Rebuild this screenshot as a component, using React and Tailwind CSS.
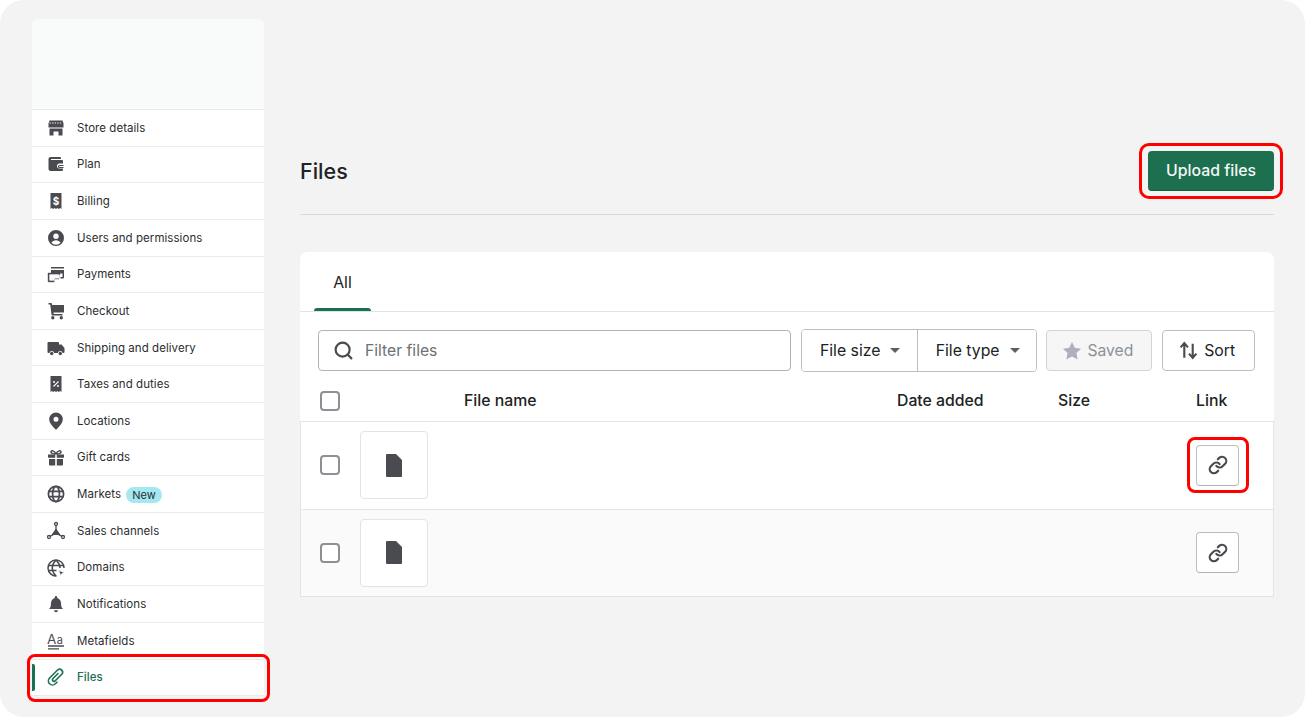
import React from "react";
import { Link as LinkIcon, Search } from "lucide-react";

const ink = "#4a4b50";

// 20x20 glyphs in the Polaris style, drawn by hand
const Glyph = ({ children, className = "" }) => (
  <svg viewBox="0 0 20 20" className={`w-[20px] h-[20px] shrink-0 ${className}`} fill={ink}>
    {children}
  </svg>
);

const icons = {
  store: (
    <Glyph>
      <path d="M3.5 2.5h13l1 3v4h-15v-4z" />
      <path d="M3.5 5h13" stroke="#fff" strokeWidth="0.9" strokeDasharray="1.4 1.2" />
      <path d="M3.5 10.5h13v7h-4v-4h-5v4h-4z" />
    </Glyph>
  ),
  plan: (
    <Glyph>
      <path d="M2.5 5a2 2 0 0 1 2-2h9.5a1 1 0 0 1 1 1v1H5v1h11a1 1 0 0 1 1 1v2.5h-3.5a2.5 2.5 0 0 0 0 5H17V16a1 1 0 0 1-1 1H4.500a2 2 0 0 1-2-2z" />
      <path d="M17.500 11.500h-4a1 1 0 0 0 0 2h4" fill="none" stroke={ink} strokeWidth="1.200" />
    </Glyph>
  ),
  billing: (
    <Glyph>
      <path d="M4.500 2h11v16l-1.400-1-1.400 1-1.300-1-1.400 1-1.400-1-1.300 1-1.400-1-1.400 1z" />
      <text x="10" y="13.500" textAnchor="middle" fontSize="10" fontWeight="700" fontFamily="Inter, sans-serif" fill="#fff">$</text>
    </Glyph>
  ),
  users: (
    <Glyph>
      <path fillRule="evenodd" d="M10 2a8 8 0 1 1 0 16 8 8 0 0 1 0-16zm0 3.500a2.700 2.700 0 1 0 0 5.400 2.700 2.700 0 0 0 0-5.400zm-4.600 9.300a6.200 6.200 0 0 0 9.200 0c-.8-1.700-2.600-2.600-4.600-2.600s-3.800.9-4.600 2.600z" />
    </Glyph>
  ),
  payments: (
    <Glyph>
      <path d="M5 3h13v1.500H5zM5 6h13v7.500a1 1 0 0 1-1 1h-2.500V13h2V9.500H5z" />
      <path d="M2 9h12v1.600H3.500v5.900H8V18H3a1 1 0 0 1-1-1zM8 18v-3.500M13 10.500v4.500H8.500" fill={ink} stroke={ink} strokeWidth="0.4" />
      <path d="M3.500 10.600H13v3.800H8v2.100H3.500z" fill="#fff" />
    </Glyph>
  ),
  checkout: (
    <Glyph>
      <path d="M2.500 2H5a1 1 0 0 1 1 .8L6.200 4H18v7.500H7.500l.2 1.500H16.500v1.500H6.500a1 1 0 0 1-1-.9L4.200 3.500H2.500z" />
      <circle cx="6.800" cy="16.700" r="1.700" />
      <circle cx="15.300" cy="16.700" r="1.700" />
    </Glyph>
  ),
  shipping: (
    <Glyph>
      <path d="M1.500 5a1 1 0 0 1 1-1h9.500a1 1 0 0 1 1 1v1.500h2.500l3 3.500v4a1 1 0 0 1-1 1h-.8a2.500 2.500 0 0 0-4.900 0H8.200a2.500 2.500 0 0 0-4.900 0h-.8a1 1 0 0 1-1-1z" />
      <circle cx="5.700" cy="15.500" r="1.700" />
      <circle cx="14.300" cy="15.500" r="1.700" />
    </Glyph>
  ),
  taxes: (
    <Glyph>
      <path d="M4.500 2h11v16l-1.400-1-1.400 1-1.300-1-1.400 1-1.400-1-1.300 1-1.400-1-1.400 1z" />
      <path d="M7.500 12.500l5-5" stroke="#fff" strokeWidth="1.100" />
      <circle cx="8" cy="8" r="1" fill="#fff" />
      <circle cx="12" cy="12" r="1" fill="#fff" />
    </Glyph>
  ),
  locations: (
    <Glyph>
      <path fillRule="evenodd" d="M10 1.500a6.800 6.800 0 0 1 6.800 6.800c0 3.700-3.800 7.600-6.100 10a1 1 0 0 1-1.400 0c-2.300-2.400-6.100-6.300-6.100-10A6.800 6.800 0 0 1 10 1.500zm0 4.300a2.500 2.500 0 1 0 0 5 2.500 2.500 0 0 0 0-5z" />
    </Glyph>
  ),
  gift: (
    <Glyph>
      <path d="M2 6.500h7.200v3.200H2zM10.800 6.500H18v3.200h-7.200zM3 11h6.200v6.500H4a1 1 0 0 1-1-1zM10.800 11H17v5.500a1 1 0 0 1-1 1h-5.200z" />
      <path d="M10 6C8.500 2.500 5 1.800 5 4c0 1.500 2.500 2 5 2zm0 0c1.500-3.500 5-4.200 5-2 0 1.500-2.500 2-5 2z" fill="none" stroke={ink} strokeWidth="1.500" />
    </Glyph>
  ),
  globe: (
    <Glyph>
      <g fill="none" stroke={ink} strokeWidth="1.700">
        <circle cx="10" cy="10" r="7.600" />
        <path d="M2.500 7.300h15M2.500 12.700h15" />
        <ellipse cx="10" cy="10" rx="3.400" ry="7.600" />
      </g>
    </Glyph>
  ),
  sales: (
    <Glyph>
      <circle cx="10" cy="3" r="1.500" fill="none" stroke={ink} strokeWidth="1.300" />
      <circle cx="3" cy="16" r="1.500" fill="none" stroke={ink} strokeWidth="1.300" />
      <circle cx="17" cy="16" r="1.500" fill="none" stroke={ink} strokeWidth="1.300" />
      <path d="M10 7.500l4 5.500v1H6v-1z" />
      <path d="M10 4.500v5M4.300 15.200l3-1.500M15.700 15.200l-3-1.500" stroke={ink} strokeWidth="1.300" />
    </Glyph>
  ),
  domains: (
    <Glyph>
      <g fill="none" stroke={ink} strokeWidth="1.500">
        <path d="M10.500 17.900A8 8 0 1 1 18 10" />
        <path d="M2.200 7.500h15.500M2.200 12.500h8.300" />
        <path d="M10 2c-5 5-5 11 0 16M10 2c2.800 2.800 4 5.500 4.100 8" />
      </g>
      <path d="M12.500 12.500l6 1.800-2.500 1.100-1.100 2.600z" stroke="#fff" strokeWidth="0.8" />
    </Glyph>
  ),
  bell: (
    <Glyph>
      <path d="M10 2a1.200 1.200 0 0 1 1.200 1.200v.7c2.400.6 3.800 2.700 3.800 5.100 0 3.300.6 4.700 2 6H3c1.400-1.300 2-2.700 2-6 0-2.400 1.400-4.500 3.800-5.100v-.7A1.200 1.200 0 0 1 10 2z" />
      <path d="M8 16.300h4a2 2 0 0 1-4 0z" />
    </Glyph>
  ),
  metafields: (
    <Glyph>
      <text x="1" y="12.500" fontSize="13.500" fontFamily="Inter, sans-serif" fontWeight="400" fill={ink}>A</text>
      <text x="10.800" y="12.500" fontSize="11" fontFamily="Inter, sans-serif" fontWeight="400" fill={ink}>a</text>
      <path d="M2 15h16M2 17.800h11" stroke={ink} strokeWidth="1.300" />
    </Glyph>
  ),
};

const Clip = () => (
  <svg viewBox="0 0 20 20" className="w-[20px] h-[20px] shrink-0" fill="none" stroke="#1c7050" strokeWidth="1.600" strokeLinecap="round">
    <path d="M12 6.500L6.800 11.700a1.600 1.600 0 0 0 2.200 2.300L16 7a3 3 0 0 0-4.200-4.200L3.600 11a4.100 4.100 0 0 0 5.800 5.800L11 15.200" />
  </svg>
);

const navItems = [
  ["Store details", "store"],
  ["Plan", "plan"],
  ["Billing", "billing"],
  ["Users and permissions", "users"],
  ["Payments", "payments"],
  ["Checkout", "checkout"],
  ["Shipping and delivery", "shipping"],
  ["Taxes and duties", "taxes"],
  ["Locations", "locations"],
  ["Gift cards", "gift"],
  ["Markets", "globe"],
  ["Sales channels", "sales"],
  ["Domains", "domains"],
  ["Notifications", "bell"],
  ["Metafields", "metafields"],
];

function NavRow({ label, icon }) {
  return (
    <div className="h-[36.65px] border-t border-[#ebebeb] flex items-center pl-[14px] bg-white">
      {icons[icon]}
      <span className="ml-[11px] pt-[1px] text-[11.5px] tracking-[0.05px] text-[#2c2e30]">{label}</span>
      {label === "Markets" && (
        <span className="ml-[5px] mt-[1px] h-[16px] px-[6px] rounded-full bg-[#a4e8f2] text-[11px] leading-[16px] text-[#2c2e30]">New</span>
      )}
    </div>
  );
}

function Sidebar() {
  return (
    <aside className="w-[232px] shrink-0 flex flex-col">
      <div className="h-[90px] bg-[#f9fafa] rounded-t-[6px]" />
      {navItems.map(([label, icon]) => (
        <NavRow key={label} label={label} icon={icon} />
      ))}
      <div className="relative h-[37px] border-y border-[#ebebeb] bg-white flex items-center pl-[14px]">
        <span className="absolute left-0 top-[4px] bottom-[4px] w-[3px] bg-[#1c7050] rounded-r-[2px]" />
        <Clip />
        <span className="ml-[11px] pt-[2px] text-[11.5px] tracking-[0.05px] font-medium text-[#1c7050]">Files</span>
        <span className="absolute left-[-5px] right-[-6px] top-[-6px] bottom-[-7px] border-[3px] border-[#ff0000] rounded-[8px]" />
      </div>
    </aside>
  );
}

function Checkbox() {
  return <span className="block w-[20px] h-[20px] rounded-[4px] border-2 border-[#8c9196] bg-white shrink-0" />;
}

const Caret = () => <span className="w-0 h-0 border-x-[5px] border-x-transparent border-t-[5px] border-t-[#5c5f62]" />;

function FileRow({ stripe }) {
  return (
    <div className={`h-[87.5px] border-t border-x border-[#e4e5e7] flex items-center pl-[18.5px] pr-[34px] ${stripe ? "bg-[#fafafa]" : "bg-white"}`}>
      <Checkbox />
      <div className="ml-[20px] w-[68px] h-[68px] rounded-[4px] border border-[#e1e3e5] bg-white flex items-center justify-center">
        <svg viewBox="0 0 16 23" className="w-[16px] h-[23px]" fill={ink}>
          <path d="M1 0h9l6 6v16a1 1 0 0 1-1 1H1a1 1 0 0 1-1-1V1a1 1 0 0 1 1-1z" />
        </svg>
      </div>
      <div className="flex-1" />
      <div className="relative">
        <button className="w-[43px] h-[41px] rounded-[4px] border border-[#babfc3] border-b-[#aeb4b9] bg-white flex items-center justify-center">
          <LinkIcon size={20} color={ink} strokeWidth={2.6} />
        </button>
        {!stripe && <span className="absolute left-[-9px] right-[-10px] top-[-8px] bottom-[-7px] border-[3px] border-[#ff0000] rounded-[8px]" />}
      </div>
    </div>
  );
}

function Toolbar() {
  const btn = "h-[41px] bg-white text-[15.8px] text-[#202223] flex items-center";
  return (
    <div className="flex items-center pl-[18px] pr-[19px] mt-[17px]">
      <div className="w-[474px] h-[41px] rounded-[4px] border border-[#aeb4b9] bg-white flex items-center pl-[14px]">
        <Search size={21} color={ink} strokeWidth={2.5} />
        <span className="ml-[11px] text-[15.7px] text-[#6d7175]">Filter files</span>
      </div>
      <div className="ml-[10px] flex rounded-[4px] border border-[#babfc3] overflow-hidden">
        <div className={`${btn} w-[116px] h-[39px] pl-[18px] gap-[10px] border-r border-[#babfc3]`}>File size <Caret /></div>
        <div className={`${btn} w-[119px] h-[39px] pl-[18px] gap-[10px]`}>File type <Caret /></div>
      </div>
      <div className="ml-[9px] w-[106px] h-[41px] rounded-[4px] border border-[#d2d5d8] bg-[#f6f6f7] flex items-center pl-[15px] gap-[5px] text-[15.7px] text-[#8c9196]">
        <svg viewBox="0 0 20 20" className="w-[20px] h-[20px]" fill="#aeb0bb">
          <path d="M10 1l2.800 5.800 6.200.9-4.500 4.400 1.100 6.300L10 15.400l-5.600 3 1.100-6.300L1 7.700l6.200-.9z" />
        </svg>
        Saved
      </div>
      <div className={`${btn} ml-[10px] w-[93px] rounded-[4px] border border-[#babfc3] pl-[15px] gap-[5px]`}>
        <svg viewBox="0 0 20 20" className="w-[21px] h-[21px]" fill="none" stroke={ink} strokeWidth="2">
          <path d="M6 17V3.500M2.500 7L6 3l3.500 4M14 3.500V17M10.500 13l3.500 4 3.500-4" />
        </svg>
        Sort
      </div>
    </div>
  );
}

function TableHead() {
  return (
    <div className="h-[49px] pt-[9px] flex items-center pl-[19.5px] text-[15.8px] font-[450] text-[#202223]">
      <Checkbox />
      <span className="ml-[124.5px] w-[433px]">File name</span>
      <span className="w-[161px]">Date added</span>
      <span className="w-[138px]">Size</span>
      <span>Link</span>
    </div>
  );
}

export default function App() {
  return (
    <div className="w-[1305px] h-[717px] bg-white overflow-hidden" style={{ fontFamily: "Inter, 'Liberation Sans', sans-serif" }}>
      <div className="h-full rounded-[24px] bg-[#f3f3f3] flex pl-[32px] pt-[19px]">
        <Sidebar />
        <main className="ml-[36px] w-[974px] flex flex-col">
          <div className="mt-[132px] h-[64px] pb-[23px] border-b border-[#d9dadb] flex items-center justify-between">
            <h1 className="text-[21.5px] font-[550] text-[#202223]">Files</h1>
            <div className="relative">
              <button className="w-[126px] h-[40px] pt-[1px] rounded-[4px] bg-[#1c7050] border-b border-[#145a3f] text-[15.8px] font-[450] text-[#f4f7f5]">Upload files</button>
              <span className="absolute left-[-9px] right-[-9px] top-[-8px] bottom-[-8px] border-[3px] border-[#ff0000] rounded-[10px]" />
            </div>
          </div>
          <section className="mt-[37px] rounded-t-[8px] bg-white border-b border-[#e1e3e5]">
            <div className="h-[60px] border-b border-[#e1e3e5] pl-[14px] flex">
              <div className="relative w-[57px] flex justify-center pt-[19px] text-[15.8px] text-[#202223]">
                All
                <span className="absolute left-0 right-0 bottom-0 h-[3px] bg-[#1c7050] rounded-t-[3px]" />
              </div>
            </div>
            <Toolbar />
            <TableHead />
            <FileRow />
            <FileRow stripe />
          </section>
        </main>
      </div>
    </div>
  );
}
